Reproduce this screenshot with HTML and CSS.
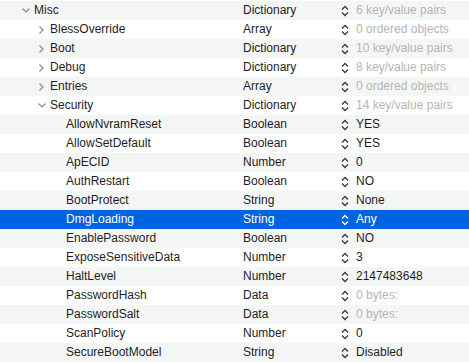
FILE: index.html
```html
<!DOCTYPE html>
<html lang="en">
<head>
    <meta charset="UTF-8">
    <title>Misc</title>
    <link rel="stylesheet" href="styles.css">
</head>
<body>

<div class="plist">
    <div class="row">
        <div class="key d0"><span class="tog"><svg width="8" height="5" viewBox="0 0 8 5"><path d="M0.5 0.5 L4 4 L7.5 0.5"/></svg></span>Misc</div>
        <div class="type">Dictionary</div>
        <div class="value muted"><svg class="step" width="8" height="12" viewBox="0 0 8 12"><path d="M1 4.5 L4 1.5 L7 4.5 M1 7.5 L4 10.5 L7 7.5"/></svg>6 key/value pairs</div>
    </div>
    <div class="row">
        <div class="key d1"><span class="tog"><svg width="5" height="8" viewBox="0 0 5 8"><path d="M0.5 0.5 L4 4 L0.5 7.5"/></svg></span>BlessOverride</div>
        <div class="type">Array</div>
        <div class="value muted"><svg class="step" width="8" height="12" viewBox="0 0 8 12"><path d="M1 4.5 L4 1.5 L7 4.5 M1 7.5 L4 10.5 L7 7.5"/></svg>0 ordered objects</div>
    </div>
    <div class="row">
        <div class="key d1"><span class="tog"><svg width="5" height="8" viewBox="0 0 5 8"><path d="M0.5 0.5 L4 4 L0.5 7.5"/></svg></span>Boot</div>
        <div class="type">Dictionary</div>
        <div class="value muted"><svg class="step" width="8" height="12" viewBox="0 0 8 12"><path d="M1 4.5 L4 1.5 L7 4.5 M1 7.5 L4 10.5 L7 7.5"/></svg>10 key/value pairs</div>
    </div>
    <div class="row">
        <div class="key d1"><span class="tog"><svg width="5" height="8" viewBox="0 0 5 8"><path d="M0.5 0.5 L4 4 L0.5 7.5"/></svg></span>Debug</div>
        <div class="type">Dictionary</div>
        <div class="value muted"><svg class="step" width="8" height="12" viewBox="0 0 8 12"><path d="M1 4.5 L4 1.5 L7 4.5 M1 7.5 L4 10.5 L7 7.5"/></svg>8 key/value pairs</div>
    </div>
    <div class="row">
        <div class="key d1"><span class="tog"><svg width="5" height="8" viewBox="0 0 5 8"><path d="M0.5 0.5 L4 4 L0.5 7.5"/></svg></span>Entries</div>
        <div class="type">Array</div>
        <div class="value muted"><svg class="step" width="8" height="12" viewBox="0 0 8 12"><path d="M1 4.5 L4 1.5 L7 4.5 M1 7.5 L4 10.5 L7 7.5"/></svg>0 ordered objects</div>
    </div>
    <div class="row">
        <div class="key d1"><span class="tog"><svg width="8" height="5" viewBox="0 0 8 5"><path d="M0.5 0.5 L4 4 L7.5 0.5"/></svg></span>Security</div>
        <div class="type">Dictionary</div>
        <div class="value muted"><svg class="step" width="8" height="12" viewBox="0 0 8 12"><path d="M1 4.5 L4 1.5 L7 4.5 M1 7.5 L4 10.5 L7 7.5"/></svg>14 key/value pairs</div>
    </div>
    <div class="row">
        <div class="key d2">AllowNvramReset</div>
        <div class="type">Boolean</div>
        <div class="value"><svg class="step" width="8" height="12" viewBox="0 0 8 12"><path d="M1 4.5 L4 1.5 L7 4.5 M1 7.5 L4 10.5 L7 7.5"/></svg>YES</div>
    </div>
    <div class="row">
        <div class="key d2">AllowSetDefault</div>
        <div class="type">Boolean</div>
        <div class="value"><svg class="step" width="8" height="12" viewBox="0 0 8 12"><path d="M1 4.5 L4 1.5 L7 4.5 M1 7.5 L4 10.5 L7 7.5"/></svg>YES</div>
    </div>
    <div class="row">
        <div class="key d2">ApECID</div>
        <div class="type">Number</div>
        <div class="value"><svg class="step" width="8" height="12" viewBox="0 0 8 12"><path d="M1 4.5 L4 1.5 L7 4.5 M1 7.5 L4 10.5 L7 7.5"/></svg>0</div>
    </div>
    <div class="row">
        <div class="key d2">AuthRestart</div>
        <div class="type">Boolean</div>
        <div class="value"><svg class="step" width="8" height="12" viewBox="0 0 8 12"><path d="M1 4.5 L4 1.5 L7 4.5 M1 7.5 L4 10.5 L7 7.5"/></svg>NO</div>
    </div>
    <div class="row">
        <div class="key d2">BootProtect</div>
        <div class="type">String</div>
        <div class="value"><svg class="step" width="8" height="12" viewBox="0 0 8 12"><path d="M1 4.5 L4 1.5 L7 4.5 M1 7.5 L4 10.5 L7 7.5"/></svg>None</div>
    </div>
    <div class="row selected">
        <div class="key d2">DmgLoading</div>
        <div class="type">String</div>
        <div class="value"><svg class="step" width="8" height="12" viewBox="0 0 8 12"><path d="M1 4.5 L4 1.5 L7 4.5 M1 7.5 L4 10.5 L7 7.5"/></svg>Any</div>
    </div>
    <div class="row">
        <div class="key d2">EnablePassword</div>
        <div class="type">Boolean</div>
        <div class="value"><svg class="step" width="8" height="12" viewBox="0 0 8 12"><path d="M1 4.5 L4 1.5 L7 4.5 M1 7.5 L4 10.5 L7 7.5"/></svg>NO</div>
    </div>
    <div class="row">
        <div class="key d2">ExposeSensitiveData</div>
        <div class="type">Number</div>
        <div class="value"><svg class="step" width="8" height="12" viewBox="0 0 8 12"><path d="M1 4.5 L4 1.5 L7 4.5 M1 7.5 L4 10.5 L7 7.5"/></svg>3</div>
    </div>
    <div class="row">
        <div class="key d2">HaltLevel</div>
        <div class="type">Number</div>
        <div class="value"><svg class="step" width="8" height="12" viewBox="0 0 8 12"><path d="M1 4.5 L4 1.5 L7 4.5 M1 7.5 L4 10.5 L7 7.5"/></svg>2147483648</div>
    </div>
    <div class="row">
        <div class="key d2">PasswordHash</div>
        <div class="type">Data</div>
        <div class="value muted"><svg class="step" width="8" height="12" viewBox="0 0 8 12"><path d="M1 4.5 L4 1.5 L7 4.5 M1 7.5 L4 10.5 L7 7.5"/></svg>0 bytes:</div>
    </div>
    <div class="row">
        <div class="key d2">PasswordSalt</div>
        <div class="type">Data</div>
        <div class="value muted"><svg class="step" width="8" height="12" viewBox="0 0 8 12"><path d="M1 4.5 L4 1.5 L7 4.5 M1 7.5 L4 10.5 L7 7.5"/></svg>0 bytes:</div>
    </div>
    <div class="row">
        <div class="key d2">ScanPolicy</div>
        <div class="type">Number</div>
        <div class="value"><svg class="step" width="8" height="12" viewBox="0 0 8 12"><path d="M1 4.5 L4 1.5 L7 4.5 M1 7.5 L4 10.5 L7 7.5"/></svg>0</div>
    </div>
    <div class="row">
        <div class="key d2">SecureBootModel</div>
        <div class="type">String</div>
        <div class="value"><svg class="step" width="8" height="12" viewBox="0 0 8 12"><path d="M1 4.5 L4 1.5 L7 4.5 M1 7.5 L4 10.5 L7 7.5"/></svg>Disabled</div>
    </div>
</div>

</body>
</html>
```

FILE: styles.css
```css
body {
    margin: 0;
    background: #fff;
    font-family: "Liberation Sans", Arial, sans-serif;
    font-size: 12px;
    color: #1e1e1e;
}
.plist {
    padding-top: 1px;
}
.row {
    display: grid;
    grid-template-columns: 243px 97px 1fr;
    height: 19px;
    line-height: 19px;
    white-space: nowrap;
}
.row:nth-child(odd) {
    background: #f4f5f5;
}
.row.selected {
    background: #0063e1;
    color: #fff;
}
.key {
    display: flex;
    align-items: center;
    overflow: hidden;
}
.key.d0 { padding-left: 17px; }
.key.d1 { padding-left: 33px; }
.key.d2 { padding-left: 66px; }
.tog {
    width: 17px;
    height: 19px;
    display: flex;
    align-items: center;
    justify-content: center;
}
.tog svg path {
    fill: none;
    stroke: #8c8c8c;
    stroke-width: 1.2;
}
.value {
    display: flex;
    align-items: center;
    padding-left: 1px;
}
.value.muted {
    color: #b5b5b5;
}
.step {
    margin-right: 7px;
}
.step path {
    fill: none;
    stroke: #3a3a3a;
    stroke-width: 1.3;
}
.selected .step path {
    stroke: #fff;
}
```
